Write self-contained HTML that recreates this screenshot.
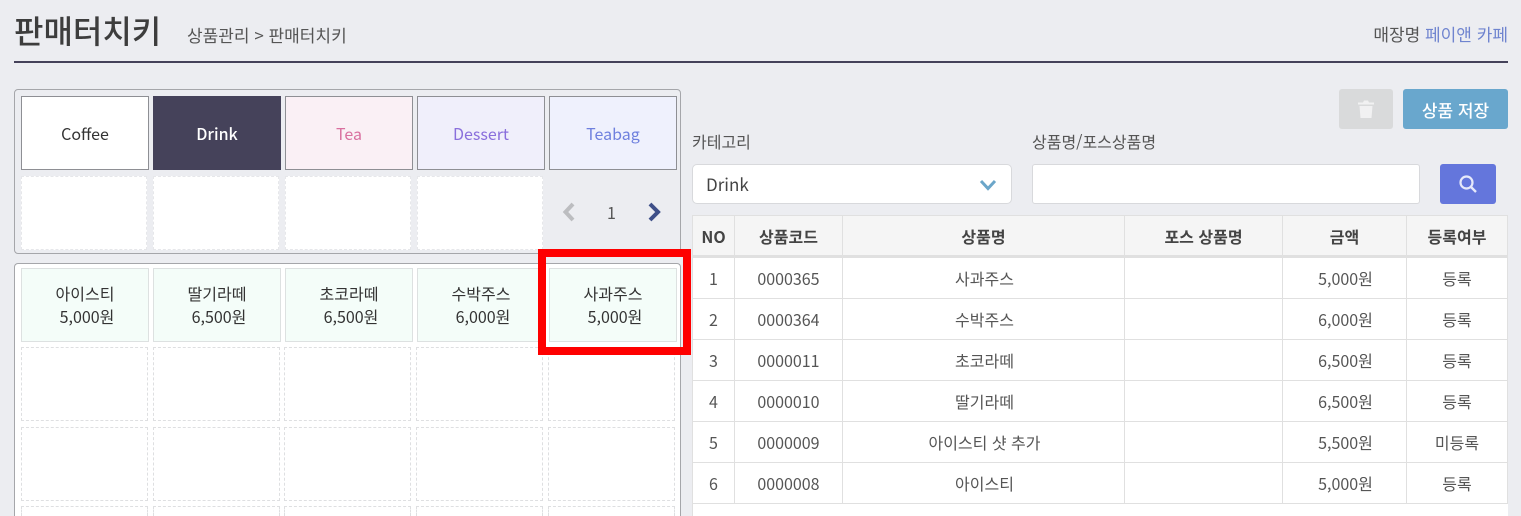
<!DOCTYPE html>
<html lang="ko">
<head>
<meta charset="utf-8">
<style>
html,body{margin:0;padding:0;width:1521px;height:516px;overflow:hidden;background:#ecedf1;}
#w{position:relative;width:1521px;height:516px;overflow:hidden;background:#ecedf1;font-family:"Noto Sans CJK KR","Liberation Sans",sans-serif;color:#333;}
.a{position:absolute;box-sizing:border-box;}
.t{position:absolute;white-space:nowrap;}
.c{display:flex;align-items:center;justify-content:center;text-align:center;}
.cat{top:96px;width:128px;height:74px;border:1px solid #8e8f94;font-size:16px;}
.emp{width:127px;height:74px;background:#fff;border:1px dashed #dedfe1;}
.e1{width:126px;top:176px;border-color:#e6e7ea;}
.e3{top:506px;height:10px;border-bottom:none;}
.prod{top:268px;width:128px;height:74px;background:#f4fdf9;border:1px solid #dde1e1;font-size:16px;line-height:23px;color:#333;}
.prod span{position:relative;left:2px;}
.panel{left:14px;width:667px;border:1px solid #a5a6aa;border-radius:4px;}
.cell{position:absolute;box-sizing:border-box;display:flex;align-items:center;justify-content:center;font-size:16px;color:#555;border-right:1px solid #e0e0e0;border-bottom:1px solid #e0e0e0;height:41px;}
.n{padding-left:2px;}
.h{background:#f5f5f5;font-weight:700;color:#444;height:43px;font-size:16px;border-top:1px solid #e0e0e0;border-bottom:3px solid #e0e0e0;}
</style>
</head>
<body>
<div id="w">
<div class="t" style="left:14px;top:7px;font-size:32px;line-height:46px;font-weight:500;color:#3d3d3d;">판매터치키</div>
<div class="t" style="left:187px;top:23px;font-size:17px;line-height:24px;color:#555;">상품관리 &gt; 판매터치키</div>
<div class="t" style="right:13px;top:22px;font-size:17px;line-height:24px;color:#555;">매장명 <span style="color:#6f84cf;">페이앤 카페</span></div>
<div class="a" style="left:14px;top:61px;width:1494px;height:2px;background:#45425a;"></div>

<div class="a panel" style="top:89px;height:165px;"></div>
<div class="a cat c" style="left:21px;background:#fff;color:#333;">Coffee</div>
<div class="a cat c" style="left:153px;background:#45425a;border-color:#45425a;color:#fff;font-weight:500;">Drink</div>
<div class="a cat c" style="left:285px;background:#faf0f5;color:#d9709f;">Tea</div>
<div class="a cat c" style="left:417px;background:#f0effb;color:#8a6fdc;">Dessert</div>
<div class="a cat c" style="left:549px;background:#eff1fd;color:#6f80de;">Teabag</div>
<div class="a emp e1" style="left:21px;"></div>
<div class="a emp e1" style="left:153px;"></div>
<div class="a emp e1" style="left:285px;"></div>
<div class="a emp e1" style="left:417px;"></div>
<svg class="a" style="left:558px;top:201px;" width="20" height="22" viewBox="0 0 20 22"><path d="M15 3L7.5 11L15 19" fill="none" stroke="#bcbdc0" stroke-width="4"/></svg>
<div class="t" style="left:607px;top:200px;font-size:16px;line-height:24px;color:#555;">1</div>
<svg class="a" style="left:645px;top:201px;" width="20" height="22" viewBox="0 0 20 22"><path d="M5 3L13 11L5 19" fill="none" stroke="#3f5089" stroke-width="4"/></svg>

<div class="a panel" style="top:263px;height:253px;background:#fff;border-bottom:none;border-radius:4px 4px 0 0;"></div>
<div class="a prod c" style="left:21px;"><div>아이스티<br><span>5,000원</span></div></div>
<div class="a prod c" style="left:153px;"><div>딸기라떼<br><span>6,500원</span></div></div>
<div class="a prod c" style="left:285px;"><div>초코라떼<br><span>6,500원</span></div></div>
<div class="a prod c" style="left:417px;"><div>수박주스<br><span>6,000원</span></div></div>
<div class="a prod c" style="left:549px;"><div>사과주스<br><span>5,000원</span></div></div>

<div class="a emp" style="left:21px;top:347px;"></div><div class="a emp" style="left:153px;top:347px;"></div><div class="a emp" style="left:284px;top:347px;"></div><div class="a emp" style="left:416px;top:347px;"></div><div class="a emp" style="left:548px;top:347px;"></div>
<div class="a emp" style="left:21px;top:427px;"></div><div class="a emp" style="left:153px;top:427px;"></div><div class="a emp" style="left:284px;top:427px;"></div><div class="a emp" style="left:416px;top:427px;"></div><div class="a emp" style="left:548px;top:427px;"></div>
<div class="a emp e3" style="left:21px;"></div><div class="a emp e3" style="left:153px;"></div><div class="a emp e3" style="left:284px;"></div><div class="a emp e3" style="left:416px;"></div><div class="a emp e3" style="left:548px;"></div>

<div class="a" style="left:538px;top:249px;width:153px;height:106px;border:8px solid #fe0000;"></div>

<div class="a c" style="left:1339px;top:89px;width:54px;height:40px;background:#d9dadb;border-radius:3px;">
<svg width="18" height="20" viewBox="0 0 18 20"><path d="M1 3.5H17V5.5H1Z M6 3.5L7 1.5H11L12 3.5Z M2.5 7H15.5L14.5 19H3.5Z" fill="#f1f1f2"/></svg>
</div>
<div class="a c" style="left:1403px;top:89px;width:105px;height:40px;background:#69a7cd;border-radius:3px;color:#fff;font-size:17px;font-weight:500;">상품 저장</div>

<div class="t" style="left:692px;top:129px;font-size:16px;line-height:24px;color:#555;">카테고리</div>
<div class="t" style="left:1032px;top:129px;font-size:16px;line-height:24px;color:#555;">상품명/포스상품명</div>
<div class="a" style="left:692px;top:164px;width:320px;height:40px;background:#fff;border:1px solid #d8d9dc;border-radius:5px;"></div>
<div class="t" style="left:706px;top:171px;font-size:17px;line-height:25px;color:#444;">Drink</div>
<svg class="a" style="left:979px;top:179px;" width="18" height="12" viewBox="0 0 18 12"><path d="M2 2L9 9.5L16 2" fill="none" stroke="#6ba6c9" stroke-width="3"/></svg>
<div class="a" style="left:1032px;top:164px;width:388px;height:40px;background:#fff;border:1px solid #d8d9dc;border-radius:3px;"></div>
<div class="a c" style="left:1440px;top:164px;width:56px;height:40px;background:#6476dc;border-radius:3px;">
<svg width="20" height="20" viewBox="0 0 20 20"><circle cx="8.5" cy="8.5" r="6" fill="none" stroke="#e6e9fa" stroke-width="2.2"/><path d="M13 13L18 18" stroke="#e6e9fa" stroke-width="2.4"/></svg>
</div>

<div class="a" style="left:692px;top:215px;width:816px;height:301px;background:#fff;border-left:1px solid #e0e0e0;"></div>

<div class="cell h" style="left:693px;top:215px;width:42px;">NO</div>
<div class="cell h" style="left:735px;top:215px;width:108px;">상품코드</div>
<div class="cell h" style="left:843px;top:215px;width:282px;">상품명</div>
<div class="cell h" style="left:1125px;top:215px;width:158px;">포스 상품명</div>
<div class="cell h" style="left:1283px;top:215px;width:124px;">금액</div>
<div class="cell h" style="left:1407px;top:215px;width:101px;">등록여부</div>

<div class="cell" style="left:693px;top:258px;width:42px;">1</div><div class="cell" style="left:735px;top:258px;width:108px;">0000365</div><div class="cell n" style="left:843px;top:258px;width:282px;">사과주스</div><div class="cell" style="left:1125px;top:258px;width:158px;"></div><div class="cell n" style="left:1283px;top:258px;width:124px;">5,000원</div><div class="cell" style="left:1407px;top:258px;width:101px;">등록</div>
<div class="cell" style="left:693px;top:299px;width:42px;">2</div><div class="cell" style="left:735px;top:299px;width:108px;">0000364</div><div class="cell n" style="left:843px;top:299px;width:282px;">수박주스</div><div class="cell" style="left:1125px;top:299px;width:158px;"></div><div class="cell n" style="left:1283px;top:299px;width:124px;">6,000원</div><div class="cell" style="left:1407px;top:299px;width:101px;">등록</div>
<div class="cell" style="left:693px;top:340px;width:42px;">3</div><div class="cell" style="left:735px;top:340px;width:108px;">0000011</div><div class="cell n" style="left:843px;top:340px;width:282px;">초코라떼</div><div class="cell" style="left:1125px;top:340px;width:158px;"></div><div class="cell n" style="left:1283px;top:340px;width:124px;">6,500원</div><div class="cell" style="left:1407px;top:340px;width:101px;">등록</div>
<div class="cell" style="left:693px;top:381px;width:42px;">4</div><div class="cell" style="left:735px;top:381px;width:108px;">0000010</div><div class="cell n" style="left:843px;top:381px;width:282px;">딸기라떼</div><div class="cell" style="left:1125px;top:381px;width:158px;"></div><div class="cell n" style="left:1283px;top:381px;width:124px;">6,500원</div><div class="cell" style="left:1407px;top:381px;width:101px;">등록</div>
<div class="cell" style="left:693px;top:422px;width:42px;">5</div><div class="cell" style="left:735px;top:422px;width:108px;">0000009</div><div class="cell n" style="left:843px;top:422px;width:282px;">아이스티 샷 추가</div><div class="cell" style="left:1125px;top:422px;width:158px;"></div><div class="cell n" style="left:1283px;top:422px;width:124px;">5,500원</div><div class="cell" style="left:1407px;top:422px;width:101px;">미등록</div>
<div class="cell" style="left:693px;top:463px;width:42px;">6</div><div class="cell" style="left:735px;top:463px;width:108px;">0000008</div><div class="cell n" style="left:843px;top:463px;width:282px;">아이스티</div><div class="cell" style="left:1125px;top:463px;width:158px;"></div><div class="cell n" style="left:1283px;top:463px;width:124px;">5,000원</div><div class="cell" style="left:1407px;top:463px;width:101px;">등록</div>
</div>
</body>
</html>
